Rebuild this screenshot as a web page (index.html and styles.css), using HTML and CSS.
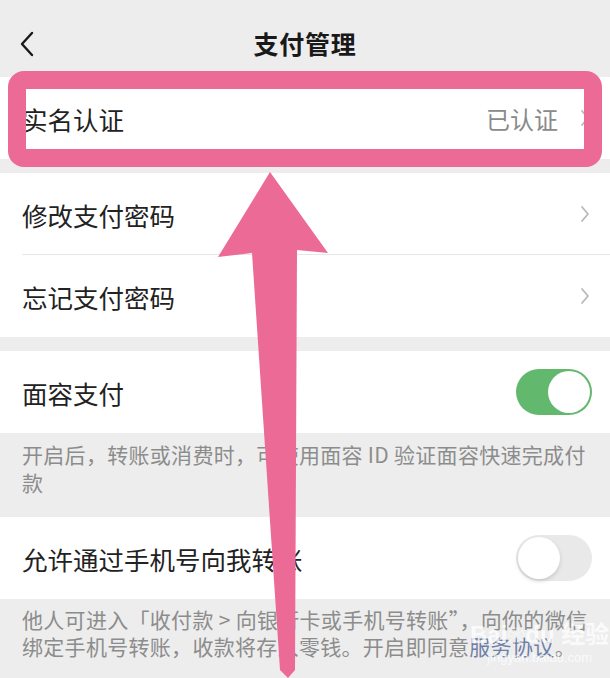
FILE: index.html
```html
<!DOCTYPE html>
<html lang="zh-CN">
<head>
    <meta charset="UTF-8">
    <meta name="viewport" content="width=device-width, initial-scale=1.0">
    <title>支付管理</title>
    <link rel="stylesheet" href="styles.css">
</head>
<body>
    <div class="page">
        <header class="topbar">
            <svg class="back" width="16" height="26" viewBox="0 0 16 26">
                <polyline points="13,2 3,13 13,24" fill="none" stroke="#191919" stroke-width="2.4" stroke-linecap="round" stroke-linejoin="round"/>
            </svg>
            <h1>支付管理</h1>
        </header>

        <div class="group">
            <div class="row">
                <span class="label">实名认证</span>
                <span class="value">已认证</span>
                <svg class="chev" width="10" height="18" viewBox="0 0 10 18"><polyline points="2,2 8,9 2,16" fill="none" stroke="#b8b8b8" stroke-width="1.8" stroke-linecap="round" stroke-linejoin="round"/></svg>
            </div>
        </div>

        <div class="group">
            <div class="row divided">
                <span class="label">修改支付密码</span>
                <svg class="chev" width="10" height="18" viewBox="0 0 10 18"><polyline points="2,2 8,9 2,16" fill="none" stroke="#b8b8b8" stroke-width="1.8" stroke-linecap="round" stroke-linejoin="round"/></svg>
            </div>
            <div class="row">
                <span class="label">忘记支付密码</span>
                <svg class="chev" width="10" height="18" viewBox="0 0 10 18"><polyline points="2,2 8,9 2,16" fill="none" stroke="#b8b8b8" stroke-width="1.8" stroke-linecap="round" stroke-linejoin="round"/></svg>
            </div>
        </div>

        <div class="group">
            <div class="row">
                <span class="label">面容支付</span>
                <span class="switch on"><span class="knob"></span></span>
            </div>
        </div>
        <p class="note first">开启后，转账或消费时，可使用面容 ID 验证面容快速完成付款</p>

        <div class="group flush">
            <div class="row">
                <span class="label">允许通过手机号向我转账</span>
                <span class="switch"><span class="knob"></span></span>
            </div>
        </div>
        <p class="note second">他人可进入「收付款 &gt; 向银行卡或手机号转账”，向你的微信绑定手机号转账，收款将存入零钱。开启即同意<a href="#">服务协议</a>。</p>

        <!-- annotation overlays -->
        <div class="highlight"></div>
        <svg class="arrow" width="610" height="678" viewBox="0 0 610 678">
            <polygon points="270,172 328,253 297,250 295,670 288,678 280,670 252,253 218,257" fill="#ec6a96"/>
        </svg>
        <div class="watermark">
            <span class="wm-logo">Bai<span class="paw">❀</span>du 经验</span>
            <span class="wm-url">jingyan.baidu.com</span>
        </div>
    </div>
</body>
</html>
```

FILE: styles.css
```css
* {
    margin: 0;
    padding: 0;
    box-sizing: border-box;
}

body {
    font-family: "Noto Sans CJK SC", "Noto Sans", sans-serif;
    background-color: #ededed;
    color: #191919;
}

.page {
    position: relative;
    width: 610px;
    height: 678px;
    overflow: hidden;
}

.topbar {
    height: 77px;
    padding-top: 8px;
    display: flex;
    align-items: center;
    justify-content: center;
    position: relative;
}

.topbar h1 {
    font-size: 25px;
    font-weight: 700;
    letter-spacing: 0.8px;
}

.back {
    position: absolute;
    left: 19px;
    top: 31px;
}

.group {
    background-color: white;
    margin-bottom: 14px;
}

.group.flush {
    margin-bottom: 0;
}

.row {
    height: 82px;
    display: flex;
    align-items: center;
    padding: 0 22px;
    position: relative;
}

.row.divided::after {
    content: "";
    position: absolute;
    left: 22px;
    right: 0;
    bottom: 0;
    height: 1px;
    background-color: #e6e6e6;
}

.label {
    font-size: 25.5px;
    flex: 1;
    color: #222;
}

.value {
    font-size: 24px;
    color: #8a8a8a;
    margin-right: 22px;
}

.chev {
    margin-right: -2px;
}

/* toggle switches */
.switch {
    width: 76px;
    height: 46px;
    border-radius: 23px;
    background-color: #e9e9e9;
    position: relative;
    margin-right: -4px;
}

.switch .knob {
    position: absolute;
    top: 2px;
    left: 2px;
    width: 42px;
    height: 42px;
    border-radius: 50%;
    background-color: white;
    box-shadow: 0 2px 4px rgba(0, 0, 0, 0.15);
}

.switch.on {
    background-color: #62b86d;
}

.switch.on .knob {
    left: 32px;
    box-shadow: none;
}

.note {
    font-size: 21px;
    letter-spacing: 0.3px;
    color: #8c8c8c;
    padding: 0 14px 0 22px;
}

.note.first {
    margin-top: -14px;
    padding-top: 7px;
    padding-bottom: 21px;
    line-height: 28px;
}

.note.second {
    padding-top: 7px;
    line-height: 27px;
}

.note a {
    color: #6d7fa6;
    text-decoration: none;
}

/* pink highlight box around first row */
.highlight {
    position: absolute;
    left: 8px;
    top: 71px;
    width: 594px;
    height: 96px;
    border: 18px solid #ec6a96;
    border-radius: 16px;
}

.arrow {
    position: absolute;
    left: 0;
    top: 0;
}

.watermark {
    position: absolute;
    left: 470px;
    top: 622px;
    display: flex;
    flex-direction: column;
    align-items: center;
    color: rgba(255, 255, 255, 0.75);
    font-family: "Liberation Sans", "Noto Sans CJK SC", sans-serif;
}

.wm-logo {
    font-size: 24px;
    font-weight: 700;
    line-height: 26px;
}

.paw {
    font-size: 18px;
}

.wm-url {
    font-size: 13px;
    line-height: 16px;
}
```
